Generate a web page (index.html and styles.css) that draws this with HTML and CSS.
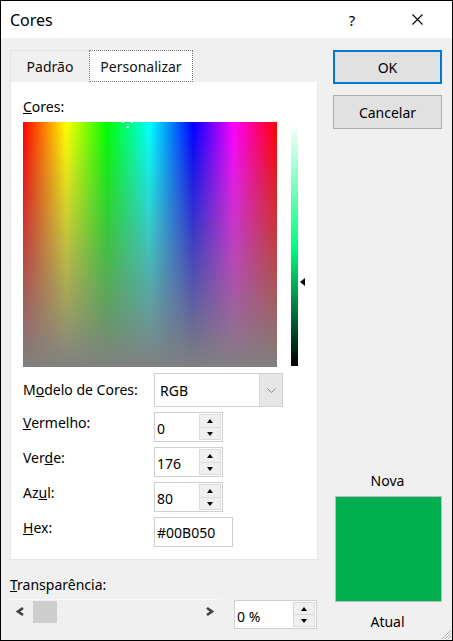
FILE: index.html
```html
<!DOCTYPE html>
<html lang="pt">
<head>
    <meta charset="UTF-8" />
    <title>Cores</title>
    <link rel="stylesheet" href="styles.css">
</head>
<body>
<div class="window">
    <div class="titlebar">
        <span class="title">Cores</span>
        <span class="help">?</span>
        <span class="close">
            <svg width="11" height="11" viewBox="0 0 11 11"><path d="M0.5 0.5L10.5 10.5M10.5 0.5L0.5 10.5" stroke="#000" stroke-width="1.1" fill="none"/></svg>
        </span>
    </div>
    <div class="main">
        <div class="left">
            <div class="tabs">
                <div class="tab">Padrão</div>
                <div class="tab active">Personalizar</div>
            </div>
            <div class="panel">
                <div class="cores-label"><u>C</u>ores:</div>
                <div class="picker">
                    <div class="spectrum">
                        <div class="spectrum-shade"></div>
                        <svg class="cross" width="11" height="9" viewBox="0 0 11 9">
                            <rect x="0" y="0" width="2" height="2" fill="#fff"/>
                            <rect x="9" y="0" width="2" height="2" fill="#fff"/>
                            <rect x="4.5" y="5" width="2" height="2" fill="#fff"/>
                        </svg>
                    </div>
                    <div class="lum">
                        <div class="lum-bar"></div>
                        <svg class="lum-arrow" width="5" height="8" viewBox="0 0 5 8"><path d="M0 4L5 0L5 8Z" fill="#000"/></svg>
                    </div>
                </div>
                <div class="fields">
                    <div class="field-label model-label">M<u>o</u>delo de Cores:</div>
                    <div class="select">
                        <span class="select-value">RGB</span>
                        <span class="select-btn">
                            <svg width="9" height="5" viewBox="0 0 9 5"><path d="M0.5 0.5L4.5 4.5L8.5 0.5" stroke="#888" stroke-width="1" fill="none"/></svg>
                        </span>
                    </div>

                    <div class="field-label"><u>V</u>ermelho:</div>
                    <div class="spin">
                        <span class="spin-value">0</span>
                        <span class="spin-btns"><span class="up"></span><span class="down"></span></span>
                    </div>

                    <div class="field-label">Ver<u>d</u>e:</div>
                    <div class="spin">
                        <span class="spin-value">176</span>
                        <span class="spin-btns"><span class="up"></span><span class="down"></span></span>
                    </div>

                    <div class="field-label">Az<u>u</u>l:</div>
                    <div class="spin">
                        <span class="spin-value">80</span>
                        <span class="spin-btns"><span class="up"></span><span class="down"></span></span>
                    </div>

                    <div class="field-label"><u>H</u>ex:</div>
                    <div class="hex">#00B050</div>
                </div>
            </div>
            <div class="transp-label"><u>T</u>ransparência:</div>
            <div class="transp-row">
                <div class="scroll">
                    <svg class="scroll-arrow" width="11" height="11" viewBox="0 0 11 11"><path d="M8 2L3 5.5L8 9" stroke="#404040" stroke-width="2.6" fill="none"/></svg>
                    <span class="thumb"></span>
                    <span class="scroll-space"></span>
                    <svg class="scroll-arrow" width="11" height="11" viewBox="0 0 11 11"><path d="M3 2L8 5.5L3 9" stroke="#404040" stroke-width="2.6" fill="none"/></svg>
                </div>
                <div class="spin spin-pct">
                    <span class="spin-value">0 %</span>
                    <span class="spin-btns"><span class="up"></span><span class="down"></span></span>
                </div>
            </div>
        </div>
        <div class="right">
            <div class="btn btn-ok">OK</div>
            <div class="btn">Cancelar</div>
            <div class="preview">
                <div class="preview-label">Nova</div>
                <div class="swatch" style="background-color: #00B050;"></div>
                <div class="preview-label atual">Atual</div>
            </div>
        </div>
    </div>
    <svg class="grip" width="12" height="12" viewBox="0 0 12 12">
        <path d="M11 2L2 11M11 5L5 11M11 8L8 11" stroke="#b5b5b5" stroke-width="1" fill="none"/>
    </svg>
</div>
</body>
</html>
```
FILE: styles.css
```css
body {
    margin: 0;
}
.window {
    position: relative;
    width: 453px;
    height: 641px;
    box-sizing: border-box;
    border: 1px solid #000;
    background-color: #f0f0f0;
    display: flex;
    flex-direction: column;
    font-family: "Noto Sans", sans-serif;
    font-size: 14px;
    color: #000;
}
.titlebar {
    height: 37px;
    flex-shrink: 0;
    background-color: #fff;
    display: flex;
    align-items: center;
}
.title {
    font-size: 16px;
    margin-left: 9px;
}
.help {
    margin-left: auto;
    width: 20px;
    text-align: center;
    font-size: 15px;
}
.close {
    width: 20px;
    height: 11px;
    margin-left: 45px;
    margin-right: 25px;
    display: flex;
    justify-content: center;
}
.main {
    flex: 1;
    display: flex;
    padding-left: 9px;
}
.left {
    width: 308px;
    display: flex;
    flex-direction: column;
}
.tabs {
    margin-top: 12px;
    height: 32px;
    display: flex;
}
.tab {
    width: 79px;
    box-sizing: border-box;
    border-top: 1px solid #e3e3e3;
    border-left: 1px solid #e3e3e3;
    text-align: center;
    line-height: 31px;
    color: #111;
}
.tab.active {
    width: 104px;
    background-color: #fff;
    border: 1px dotted #777;
}
.panel {
    height: 478px;
    box-sizing: border-box;
    background-color: #fff;
    border: 1px solid #e6e6e6;
    border-top: none;
    padding: 15px 0 0 12px;
}
.cores-label {
    line-height: 20px;
}
.picker {
    display: flex;
    margin-top: 5px;
}
.spectrum {
    position: relative;
    width: 254px;
    height: 245px;
    background: linear-gradient(to right, #ff0000 0%, #ffff00 17%, #00ff00 33%, #00ffff 50%, #0000ff 67%, #ff00ff 83%, #ff0000 100%);
}
.spectrum-shade {
    width: 100%;
    height: 100%;
    background: linear-gradient(to bottom, rgba(128, 128, 128, 0), #808080);
}
.cross {
    position: absolute;
    left: 99px;
    top: -1px;
}
.lum {
    position: relative;
    margin-left: 14px;
    padding-top: 5px;
}
.lum-bar {
    width: 7px;
    height: 239px;
    background: linear-gradient(to bottom, #f4fff9 0%, #00ff80 50%, #000 100%);
}
.lum-arrow {
    position: absolute;
    left: 9px;
    top: 156px;
}
.fields {
    margin-top: 6px;
    display: grid;
    grid-template-columns: 131px auto;
    row-gap: 5px;
    align-items: start;
}
.field-label {
    line-height: 20px;
    padding-top: 1px;
}
.field-label.model-label {
    align-self: center;
    padding-top: 0;
}
.select {
    width: 129px;
    height: 34px;
    box-sizing: border-box;
    border: 1px solid #cfcfcf;
    background-color: #fff;
    display: flex;
    align-items: center;
}
.select-value {
    flex: 1;
    padding-left: 5px;
}
.select-btn {
    width: 22px;
    height: 100%;
    background-color: #e6e6e6;
    border-left: 1px solid #d6d6d6;
    display: flex;
    align-items: center;
    justify-content: center;
}
.spin, .hex {
    height: 30px;
    box-sizing: border-box;
    border: 1px solid #cfcfcf;
    background-color: #fff;
    display: flex;
    align-items: center;
}
.spin {
    width: 69px;
}
.hex {
    width: 79px;
    padding-left: 2px;
}
.spin-value {
    flex: 1;
    padding-left: 2px;
    padding-top: 3px;
}
.spin-btns {
    width: 22px;
    height: 26px;
    margin-right: 1px;
    display: flex;
    flex-direction: column;
}
.spin-btns span {
    flex: 1;
    background-color: #f0f0f0;
    border: 1px solid #dadada;
    position: relative;
}
.spin-btns .down {
    border-top: none;
}
.spin-btns span::after {
    content: "";
    position: absolute;
    left: 7px;
    top: 4px;
    border-left: 3.5px solid transparent;
    border-right: 3.5px solid transparent;
}
.spin-btns .up::after {
    border-bottom: 4px solid #000;
}
.spin-btns .down::after {
    border-top: 4px solid #000;
}
.transp-label {
    margin-top: 15px;
    line-height: 20px;
}
.transp-row {
    margin-top: 4px;
    display: flex;
    align-items: flex-start;
}
.scroll {
    width: 210px;
    height: 24px;
    box-sizing: border-box;
    border-top: 1px solid #f8f8f8;
    display: flex;
    align-items: center;
}
.scroll-arrow {
    margin-left: 5px;
}
.thumb {
    width: 24px;
    height: 22px;
    margin-left: 7px;
    background-color: #cdcdcd;
}
.scroll-space {
    flex: 1;
}
.scroll .scroll-arrow:last-child {
    margin-right: 5px;
}
.spin.spin-pct {
    width: 83px;
    height: 29px;
    margin-left: 14px;
    margin-top: 1px;
}
.spin-pct .spin-btns {
    height: 25px;
}
.right {
    width: 109px;
    margin-left: 15px;
    display: flex;
    flex-direction: column;
}
.btn {
    height: 34px;
    box-sizing: border-box;
    border: 1px solid #adadad;
    background-color: #e1e1e1;
    display: flex;
    align-items: center;
    justify-content: center;
    margin-top: 11px;
}
.btn.btn-ok {
    margin-top: 12px;
    border-color: #0078d7;
    box-shadow: inset 0 0 0 1px #0078d7;
}
.preview {
    margin-top: auto;
    padding-bottom: 8px;
    display: flex;
    flex-direction: column;
    align-items: center;
}
.preview-label {
    line-height: 20px;
}
.swatch {
    width: 107px;
    height: 106px;
    box-sizing: border-box;
    border: 1px solid #bdbdbd;
    margin-top: 5px;
    margin-left: 1px;
}
.preview-label.atual {
    margin-top: 10px;
}
.grip {
    position: absolute;
    right: 0;
    bottom: 0;
}
```
